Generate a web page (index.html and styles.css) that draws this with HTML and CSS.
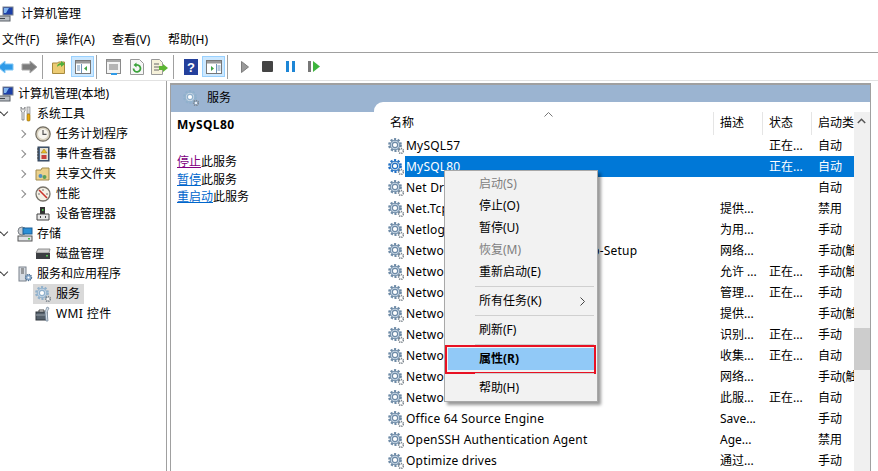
FILE: index.html
```html
<!DOCTYPE html>
<html>
  <head>
    <title>计算机管理</title>
    <link rel="stylesheet" href="styles.css">
  </head>
  <body>
    <svg class="defs" width="0" height="0">
      <symbol id="gear" viewBox="0 0 16 16">
        <circle cx="7" cy="7" r="5.700" fill="none" stroke="currentColor" stroke-width="2.400" stroke-dasharray="2.100 1.500"/>
        <circle cx="7" cy="7" r="4.800" fill="#c3d3e2" stroke="currentColor" stroke-width="1"/>
        <circle cx="7" cy="7" r="2.600" fill="#fff" stroke="currentColor" stroke-width="1.100"/>
        <circle cx="13" cy="13" r="2.400" fill="none" stroke="#7d868e" stroke-width="1.600" stroke-dasharray="1.200 .8"/>
        <circle cx="13" cy="13" r="1" fill="#fff"/>
      </symbol>
      <symbol id="computer" viewBox="0 0 16 16">
        <rect x="5" y="1" width="10" height="8" fill="#1c3fa8" stroke="#7a828c"/>
        <path d="M6 2h5l-3 5H6z" fill="#7fb4ee"/>
        <rect x="0" y="10" width="12" height="5" fill="#b9bec4" stroke="#5a6068"/>
        <rect x="2" y="12" width="5" height="1" fill="#3e444b"/>
      </symbol>
      <symbol id="tools" viewBox="0 0 16 16">
        <path d="M4 1v4l1 1v8h2V6l1-1V1L7 3H5z" fill="#eee" stroke="#77797c" stroke-width=".8"/>
        <rect x="10" y="1" width="3" height="7" fill="#d9d9d9" stroke="#77797c" stroke-width=".6"/>
        <rect x="10" y="8" width="3" height="7" rx="1" fill="#e8a90f" stroke="#8b6508" stroke-width=".6"/>
      </symbol>
      <symbol id="clock" viewBox="0 0 16 16">
        <circle cx="8" cy="8" r="7.200" fill="#d9d2c0" stroke="#6f6a5f" stroke-width="1.200"/>
        <circle cx="8" cy="8" r="5" fill="#f7f5ee"/>
        <path d="M8 4v4.300h3.500" fill="none" stroke="#555" stroke-width="1.200"/>
      </symbol>
      <symbol id="eventlog" viewBox="0 0 16 16">
        <rect x="3" y="1" width="11" height="14" fill="#4c6583" stroke="#2f4057"/>
        <rect x="5" y="2" width="8" height="12" fill="#e6e3d6"/>
        <path d="M9 3l3 4H6z" fill="#ecc026" stroke="#8d701a" stroke-width=".5"/>
        <rect x="6.500" y="9" width="5" height="4" fill="#c8413b"/>
        <path d="M2 3h2M2 6h2M2 9h2M2 12h2" stroke="#444"/>
      </symbol>
      <symbol id="share" viewBox="0 0 16 16">
        <path d="M1 4h5l1-2h7v12H1z" fill="#ecd28c" stroke="#a08a4e"/>
        <circle cx="5.500" cy="10" r="2" fill="#4f8fc7"/>
        <circle cx="9.500" cy="11" r="2" fill="#5aa05a"/>
      </symbol>
      <symbol id="perf" viewBox="0 0 16 16">
        <circle cx="8" cy="8" r="7" fill="#f3f0e5" stroke="#77736a" stroke-width="1.300"/>
        <path d="M4 4l8 8" stroke="#c9342c" stroke-width="1.600"/>
        <path d="M8 3v2M3 8h2M13 8h-2" stroke="#777"/>
      </symbol>
      <symbol id="device" viewBox="0 0 16 16">
        <rect x="5" y="1" width="5" height="7" fill="#333"/>
        <rect x="7" y="3" width="1.500" height="2" fill="#4cc24c"/>
        <path d="M2 8h12v6H2z" fill="#e7e7e7" stroke="#444"/>
        <path d="M5 11h1M10 11h1" stroke="#444" stroke-width="2"/>
      </symbol>
      <symbol id="storage" viewBox="0 0 16 16">
        <circle cx="5" cy="5" r="4" fill="#c9ccd0" stroke="#7d8288"/>
        <rect x="6" y="2" width="9" height="6" fill="#2b8fd6" stroke="#1c5f96"/>
        <rect x="1" y="10" width="14" height="5" fill="#dfe2e5" stroke="#555"/>
        <rect x="11" y="12" width="2" height="1.500" fill="#49b949"/>
      </symbol>
      <symbol id="disk" viewBox="0 0 16 16">
        <path d="M3 3h12l-1 4H1z" fill="#d5d5d5" stroke="#777" stroke-width=".8"/>
        <rect x="1" y="7" width="14" height="6" fill="#3c3f43"/>
        <rect x="11" y="9" width="2" height="1.500" fill="#58c558"/>
      </symbol>
      <symbol id="server" viewBox="0 0 16 16">
        <rect x="2" y="1" width="7" height="14" fill="#d6dbe1" stroke="#7a828c"/>
        <path d="M4 3h3M4 5h3M4 7h3" stroke="#555"/>
        <circle cx="11.500" cy="11.500" r="3" fill="#8eaed0" stroke="#50708f" stroke-width="1.300" stroke-dasharray="1.200 .8"/>
        <circle cx="11.500" cy="11.500" r="1" fill="#fff"/>
      </symbol>
      <symbol id="wmi" viewBox="0 0 16 16">
        <rect x="1" y="6" width="11" height="8" fill="#55606b" stroke="#30363c"/>
        <path d="M4 6V4h5v2" fill="none" stroke="#444"/>
        <path d="M1 9h11" stroke="#9aa3ac"/>
        <path d="M12 1l2 1-2 4 1 9h-2l-1-9z" fill="#d8e2ec" stroke="#6f8296" stroke-width=".7"/>
      </symbol>
      <symbol id="pane" viewBox="0 0 16 14">
        <rect x=".5" y=".5" width="15" height="13" fill="#fff" stroke="#777"/>
        <rect x="1" y="1" width="14" height="2.500" fill="#9a9a9a"/>
      </symbol>
    </svg>

    <div class="titlebar">
      <svg class="ico"><use href="#computer"/></svg>
      <span>计算机管理</span>
    </div>

    <div class="menubar">
      <span>文件(F)</span>
      <span>操作(A)</span>
      <span>查看(V)</span>
      <span>帮助(H)</span>
    </div>

    <div class="toolbar">
      <div class="tool first">
        <svg width="16" height="14" viewBox="0 0 16 14"><path d="M7 1v3h8v6H7v3L0 7z" fill="#2f9be8" stroke="#7fc6f5"/></svg>
      </div>
      <div class="tool">
        <svg width="16" height="14" viewBox="0 0 16 14"><path d="M9 1v3H1v6h8v3l7-6z" fill="#7b7b7b" stroke="#a9a9a9"/></svg>
      </div>
      <div class="tsep"></div>
      <div class="tool">
        <svg width="15" height="15" viewBox="0 0 15 15"><path d="M.5 4h5l1-1h6v11.500H.5z" fill="#eccb73" stroke="#a78a3e"/><path d="M5 8c0-3 2-4 4-4V2l4 3-4 3V6C7 6 6 7 5 8z" fill="#4fb03e"/></svg>
      </div>
      <div class="tool on">
        <svg width="16" height="14" viewBox="0 0 16 14"><use href="#pane"/><path d="M6.500 4v9M2 6h3M2 8h3M2 10h3" stroke="#6d93b8"/><path d="M12 6v5L9 8.500z" fill="#3fa244"/></svg>
      </div>
      <div class="tsep"></div>
      <div class="tool">
        <svg width="15" height="16" viewBox="0 0 15 16"><rect x=".5" y=".5" width="14" height="14" fill="#f4f4f4" stroke="#8a8a8a"/><rect x="1" y="1" width="13" height="2" fill="#a9a9a9"/><path d="M3 6h9M3 8h9M3 10h9" stroke="#777"/><rect x="5" y="14" width="6" height="2" fill="#2f9be8"/></svg>
      </div>
      <div class="tool">
        <svg width="14" height="16" viewBox="0 0 14 16"><path d="M.5.500h9l4 4v11H.5z" fill="#f6f6f6" stroke="#999"/><path d="M3.500 9.500a3.500 3.500 0 1 0 2-3.200" fill="none" stroke="#3ba33b" stroke-width="1.800"/><path d="M6.500 3.500v5l-3-2.500z" fill="#3ba33b"/></svg>
      </div>
      <div class="tool">
        <svg width="17" height="16" viewBox="0 0 17 16"><path d="M.5.500h8l3 3v12H.5z" fill="#f6f1da" stroke="#999"/><path d="M3 5h5M3 8h5M3 11h5" stroke="#666"/><path d="M8 7h4V5l5 4-5 4v-2H8z" fill="#5cb531"/></svg>
      </div>
      <div class="tsep"></div>
      <div class="tool">
        <svg width="14" height="16" viewBox="0 0 14 16"><rect width="14" height="16" fill="#24409c"/><text x="7" y="13" class="help-q">?</text></svg>
      </div>
      <div class="tool on">
        <svg width="16" height="14" viewBox="0 0 16 14"><use href="#pane"/><path d="M10.500 4v9M11.500 6h3M11.500 8h3M11.500 10h3" stroke="#6d93b8"/><path d="M5 6v5l3-2.500z" fill="#3fa244"/></svg>
      </div>
      <div class="tsep"></div>
      <div class="tool">
        <svg width="8" height="12" viewBox="0 0 8 12"><path d="M.5.500L7.500 6 .5 11.500z" fill="#9a9a9a" stroke="#7d7d7d"/></svg>
      </div>
      <div class="tool">
        <svg width="11" height="11" viewBox="0 0 11 11"><rect width="11" height="11" rx="1" fill="#444"/></svg>
      </div>
      <div class="tool">
        <svg width="9" height="11" viewBox="0 0 9 11"><path d="M0 0h3v11H0zM6 0h3v11H6z" fill="#1d86d6"/></svg>
      </div>
      <div class="tool">
        <svg width="12" height="11" viewBox="0 0 12 11"><rect width="3" height="11" fill="#777"/><path d="M5 0l7 5.500L5 11z" fill="#3db53d"/></svg>
      </div>
    </div>

    <div class="main">
      <div class="tree">
        <div class="node l0"><svg class="ico"><use href="#computer"/></svg><span>计算机管理(本地)</span></div>
        <div class="node l1"><i class="arrow down"></i><svg class="ico"><use href="#tools"/></svg><span>系统工具</span></div>
        <div class="node l2"><i class="arrow"></i><svg class="ico"><use href="#clock"/></svg><span>任务计划程序</span></div>
        <div class="node l2"><i class="arrow"></i><svg class="ico"><use href="#eventlog"/></svg><span>事件查看器</span></div>
        <div class="node l2"><i class="arrow"></i><svg class="ico"><use href="#share"/></svg><span>共享文件夹</span></div>
        <div class="node l2"><i class="arrow"></i><svg class="ico"><use href="#perf"/></svg><span>性能</span></div>
        <div class="node l2"><i class="arrow none"></i><svg class="ico"><use href="#device"/></svg><span>设备管理器</span></div>
        <div class="node l1"><i class="arrow down"></i><svg class="ico"><use href="#storage"/></svg><span>存储</span></div>
        <div class="node l2"><i class="arrow none"></i><svg class="ico"><use href="#disk"/></svg><span>磁盘管理</span></div>
        <div class="node l1"><i class="arrow down"></i><svg class="ico"><use href="#server"/></svg><span>服务和应用程序</span></div>
        <div class="node l2"><i class="arrow none"></i><div class="picked"><svg class="ico gear pale"><use href="#gear"/></svg><span>服务</span></div></div>
        <div class="node l2"><i class="arrow none"></i><svg class="ico"><use href="#wmi"/></svg><span class="wide">WMI 控件</span></div>
      </div>

      <div class="pane">
        <div class="band">
          <svg class="ico gear pale"><use href="#gear"/></svg>
          <span>服务</span>
        </div>
        <div class="pane-body">
          <div class="actions">
            <h4>MySQL80</h4>
            <p><a class="seen">停止</a>此服务</p>
            <p><a>暂停</a>此服务</p>
            <p><a>重启动</a>此服务</p>
          </div>
          <div class="list">
            <div class="cols">
              <div class="head">
                <div class="h-name">名称<svg class="sort" width="9" height="5" viewBox="0 0 9 5"><path d="M.5 4.500l4-4 4 4" fill="none" stroke="#777"/></svg></div>
                <div>描述</div>
                <div>状态</div>
                <div>启动类型</div>
              </div>
              <div class="row"><svg class="ico gear"><use href="#gear"/></svg><div class="cells"><div>MySQL57</div><div></div><div>正在...</div><div>自动</div></div></div>
              <div class="row sel"><svg class="ico gear"><use href="#gear"/></svg><div class="cells"><div>MySQL80</div><div></div><div>正在...</div><div>自动</div></div></div>
              <div class="row"><svg class="ico gear"><use href="#gear"/></svg><div class="cells"><div>Net Driver HPZ12</div><div></div><div></div><div>自动</div></div></div>
              <div class="row"><svg class="ico gear"><use href="#gear"/></svg><div class="cells"><div>Net.Tcp Port Sharing Service</div><div>提供...</div><div></div><div>禁用</div></div></div>
              <div class="row"><svg class="ico gear"><use href="#gear"/></svg><div class="cells"><div>Netlogon</div><div>为用...</div><div></div><div>手动</div></div></div>
              <div class="row"><svg class="ico gear"><use href="#gear"/></svg><div class="cells"><div>Network Connected Devices Auto-Setup</div><div>网络...</div><div></div><div>手动(触发...</div></div></div>
              <div class="row"><svg class="ico gear"><use href="#gear"/></svg><div class="cells"><div>Network Connection Broker</div><div>允许 ...</div><div>正在...</div><div>手动(触发...</div></div></div>
              <div class="row"><svg class="ico gear"><use href="#gear"/></svg><div class="cells"><div>Network Connections</div><div>管理...</div><div>正在...</div><div>手动</div></div></div>
              <div class="row"><svg class="ico gear"><use href="#gear"/></svg><div class="cells"><div>Network Connectivity Assistant</div><div>提供...</div><div></div><div>手动(触发...</div></div></div>
              <div class="row"><svg class="ico gear"><use href="#gear"/></svg><div class="cells"><div>Network List Service</div><div>识别...</div><div>正在...</div><div>手动</div></div></div>
              <div class="row"><svg class="ico gear"><use href="#gear"/></svg><div class="cells"><div>Network Location Awareness</div><div>收集...</div><div>正在...</div><div>自动</div></div></div>
              <div class="row"><svg class="ico gear"><use href="#gear"/></svg><div class="cells"><div>Network Setup Service</div><div>网络...</div><div></div><div>手动(触发...</div></div></div>
              <div class="row"><svg class="ico gear"><use href="#gear"/></svg><div class="cells"><div>Network Store Interface Service</div><div>此服...</div><div>正在...</div><div>自动</div></div></div>
              <div class="row"><svg class="ico gear"><use href="#gear"/></svg><div class="cells"><div>Office 64 Source Engine</div><div>Save...</div><div></div><div>手动</div></div></div>
              <div class="row"><svg class="ico gear"><use href="#gear"/></svg><div class="cells"><div>OpenSSH Authentication Agent</div><div>Age...</div><div></div><div>禁用</div></div></div>
              <div class="row"><svg class="ico gear"><use href="#gear"/></svg><div class="cells"><div>Optimize drives</div><div>通过...</div><div></div><div>手动</div></div></div>
            </div>
            <div class="scroll">
              <svg class="up" width="9" height="6" viewBox="0 0 9 6"><path d="M.8 5l3.700-3.700L8.200 5" fill="none" stroke="#555" stroke-width="1.500"/></svg>
              <div class="thumb"></div>
            </div>
          </div>
        </div>
      </div>
    </div>

    <div class="ctx">
      <div class="item off">启动(S)</div>
      <div class="item">停止(O)</div>
      <div class="item">暂停(U)</div>
      <div class="item off">恢复(M)</div>
      <div class="item">重新启动(E)</div>
      <div class="msep"></div>
      <div class="item more">所有任务(K)<svg width="5" height="9" viewBox="0 0 5 9"><path d="M.5.500l4 4-4 4" fill="none" stroke="#444"/></svg></div>
      <div class="msep"></div>
      <div class="item">刷新(F)</div>
      <div class="msep"></div>
      <div class="item hot">属性(R)</div>
      <div class="msep"></div>
      <div class="item">帮助(H)</div>
    </div>
  </body>
</html>
```

FILE: styles.css
```css
/* Basic styling */
html, body { margin: 0; height: 100%; }
body {
  width: 878px;
  height: 471px;
  overflow: hidden;
  position: relative;
  background: #fff;
  color: #000;
  font: 12px/16px "Noto Sans", "Noto Sans CJK SC", sans-serif;
}
.defs { position: absolute; }
.ico { width: 16px; height: 16px; flex: none; }
.gear { color: #6d8aa6; }
.gear.pale { color: #8fb0cc; }

.titlebar { height: 27px; display: flex; align-items: center; gap: 7px; }
.titlebar .ico { margin-left: -2px; }

.menubar { height: 25px; display: flex; align-items: center; gap: 16px; padding: 1px 0 0 2px; box-sizing: border-box; }
.menubar span { width: 40px; white-space: nowrap; }
.menubar span:first-child { width: 38px; }

/* toolbar */
.toolbar { height: 28px; box-sizing: border-box; border-top: 1px solid #a0a0a0; display: flex; align-items: center; }
.tool { width: 23px; height: 21px; box-sizing: border-box; display: flex; align-items: center; justify-content: center; flex: none; }
.tool.first { margin-left: -6px; }
.tool.on { background: #cce8ff; border: 1px solid #99d1ff; }
.tsep { width: 1px; height: 24px; background: #a0a0a0; margin: 0 5px 0 2px; flex: none; }
.help-q { fill: #fff; font: bold 13px "Liberation Sans", sans-serif; text-anchor: middle; }

/* layout below the toolbar */
.main { display: flex; height: 391px; border-top: 1px solid #e2e2e2; }

.tree { box-sizing: border-box; width: 167px; border-right: 1px solid #a0a0a0; padding-top: 3px; flex: none; overflow: hidden; }
.node { height: 20px; display: flex; align-items: center; white-space: nowrap; }
.node .ico { margin-right: 4px; }
.l0 .ico { margin-left: -2px; }
.l2 { padding-left: 18px; }
.l2 .ico { margin-right: 5px; }
.wide { letter-spacing: .4px; }
.arrow { width: 17px; flex: none; display: block; height: 10px; position: relative; }
.arrow::before {
  content: "";
  position: absolute;
  left: 1px;
  top: 2px;
  width: 5px;
  height: 5px;
  border-top: 1px solid #8c8c8c;
  border-right: 1px solid #8c8c8c;
  transform: rotate(45deg);
}
.arrow.down::before { left: 1px; top: 0; border-color: #444; transform: rotate(135deg); }
.arrow.none::before { display: none; }
.picked { display: flex; align-items: center; height: 20px; background: #d9d9d9; margin-left: -2px; padding: 0 4px 0 2px; }

.pane { flex: none; width: 701px; margin-left: 3px; border-left: 1px solid #a0a0a0; border-top: 2px solid #a0a0a0; margin-top: 2px; box-sizing: border-box; border-right: 1px solid #a0a0a0; display: flex; flex-direction: column; }
.band { height: 27px; background: #9bb4d1; display: flex; align-items: center; gap: 8px; padding-left: 12px; padding-bottom: 1px; box-sizing: border-box; flex: none; }
.pane-body { flex: 1; display: flex; min-height: 0; }

.actions { width: 203px; box-sizing: border-box; padding: 5px 0 0 6px; flex: none; }
.actions h4 { margin: 0 0 21px; font-size: 12px; line-height: 16px; font-weight: bold; letter-spacing: .4px; }
.actions p { margin: 0 0 1.500px; }
.actions a { color: #0066cc; text-decoration: underline; }
.actions a.seen { color: #800080; }

.list { flex: 1; display: flex; margin-top: -10px; background: #fff; border-top-left-radius: 9px; min-width: 0; position: relative; }
.cols { flex: 1; min-width: 0; overflow: hidden; }
.head { height: 33px; box-sizing: border-box; padding-top: 10px; display: grid; grid-template-columns: 339px 49px 49px 43px; }
.head > div { padding-left: 6px; border-left: 1px solid #e5e5e5; height: 23px; line-height: 21px; overflow: hidden; white-space: nowrap; }
.head > .h-name { padding-left: 16px; border-left: 0; position: relative; }
.sort { position: absolute; left: 170px; top: 0; }
.row { height: 21px; display: flex; align-items: center; padding-left: 14px; }
.cells { display: grid; grid-template-columns: 308px 49px 49px 43px; flex: none; margin-left: 1px; height: 21px; line-height: 21px; }
.cells > div { padding-left: 7px; overflow: hidden; white-space: nowrap; }
.cells > div:first-child { padding-left: 1px; letter-spacing: .2px; }
.sel .cells { background: #0078d7; color: #fff; }
.sel .gear { color: #1f6fc4; }

.scroll { width: 16px; flex: none; background: #f0f0f0; margin-top: 10px; position: relative; }
.up { position: absolute; left: 3px; top: 6px; }
.thumb { position: absolute; left: 0; right: 0; top: 216px; height: 42px; background: #cdcdcd; }

/* right click menu */
.ctx {
  position: absolute;
  left: 444px;
  top: 170px;
  width: 154px;
  height: 232px;
  box-sizing: border-box;
  padding: 2px 3px;
  background: #f2f2f2;
  border: 1px solid #a8a8a8;
  box-shadow: 3px 3px 3px rgba(0, 0, 0, .4);
}
.item { height: 22px; line-height: 22px; padding-left: 31px; position: relative; white-space: nowrap; }
.item.off { color: #7f7f7f; }
.item.more svg { position: absolute; right: 9px; top: 7px; }
.item.hot { background: #91c9f7; font-weight: bold; }
.item.hot::after { content: ""; position: absolute; left: -3px; right: -2px; top: -3px; bottom: -4px; border: 2px solid #e81123; }
.msep { height: 7px; margin-left: 27px; position: relative; }
.msep::before { content: ""; position: absolute; left: 0; right: 0; top: 3px; height: 1px; background: #d0d0d0; }
```
